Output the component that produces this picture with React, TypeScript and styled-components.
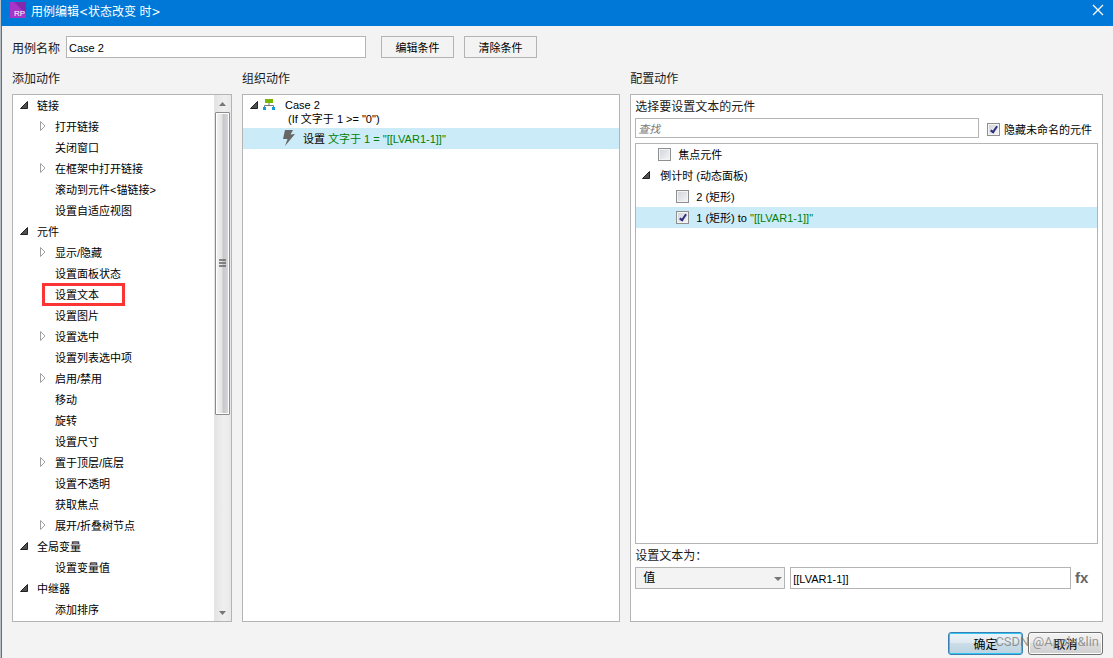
import React from 'react';
import styled, { createGlobalStyle, css } from 'styled-components';

const sans = `"Liberation Sans", "Noto Sans CJK SC", sans-serif`;
const border = '#b4b4b4';
const green = '#008000';

const GlobalStyle = createGlobalStyle`
  *, *::before, *::after { box-sizing: border-box; }
  body { margin: 0; background: #f3f3f3; font-family: ${sans}; font-size: 11px; color: #000; }
  button, input, select { font: inherit; color: inherit; margin: 0; }
  ul { list-style: none; margin: 0; padding: 0; }
`;

const Dialog = styled.main`
  display: flex;
  flex-direction: column;
  min-width: 900px;
  min-height: 100vh;
  padding-left: 1px;
  background: #f3f3f3;
  border-left: 1px solid #b9bec4;
  box-shadow: inset 1px 0 #1f83d0;
`;

const TitleBar = styled.header`
  display: flex;
  align-items: center;
  height: 26px;
  padding: 0 9px;
  margin-left: -1px;
  background: #0078d7;
  color: #fff;
`;

const Title = styled.h1`
  flex: 1;
  margin: 0 0 3px 5px;
  font: 400 12px/18px "DejaVu Sans Condensed", "Noto Sans CJK SC", sans-serif;
`;

const AppIcon = styled.svg`
  width: 16px;
  height: 16px;
  margin-bottom: 6px;
`;

const CloseButton = styled.button`
  display: flex;
  padding: 0;
  margin-bottom: 6px;
  border: 0;
  background: none;
`;

const Body = styled.div`
  flex: 1;
  display: flex;
  flex-direction: column;
  padding: 10px 10px 3px;
`;

const NameRow = styled.form`
  display: flex;
  align-items: center;
  gap: 10px;
`;

const NameLabel = styled.label`
  margin-right: -4px;
  font-size: 12px;
  color: #1a1a1a;
`;

const TextInput = styled.input<{ $height?: number }>`
  height: ${(p) => p.$height ?? 22}px;
  min-width: 0;
  padding: 2px 2px 0;
  border: 1px solid ${border};
  border-radius: 0;
  background: #fff;
  outline: 0;
  &::placeholder { color: #777; font-style: italic; opacity: 1; }
`;

const NameInput = styled(TextInput)`
  width: 300px;
  margin-right: 5px;
`;

const FlatButton = styled.button`
  width: 73px;
  height: 22px;
  padding: 0 0 1px;
  border: 1px solid ${border};
  background: #f3f3f3;
`;

const Columns = styled.div`
  flex: 1;
  display: grid;
  grid-template-columns: 220px 4fr 5fr;
  gap: 10px;
  padding: 10px 0;
`;

const Column = styled.section`
  display: flex;
  flex-direction: column;
  min-width: 0;
`;

const ColumnTitle = styled.h2`
  margin: 0 0 3px;
  font: 400 12px/23px ${sans};
  color: #1a1a1a;
`;

const Panel = styled.div`
  flex: 1;
  display: flex;
  border: 1px solid ${border};
  background: #fff;
`;

const Tree = styled.ul`
  flex: 1;
  min-width: 0;
`;

const TreeRow = styled.li<{ $indent: number; $selected?: boolean }>`
  position: relative;
  display: flex;
  align-items: center;
  height: 21px;
  padding: 0 0 2px ${(p) => p.$indent}px;
  white-space: pre;
  background: ${(p) => (p.$selected ? '#cbebf8' : 'transparent')};
`;

const Toggle = styled.button`
  flex: none;
  display: flex;
  align-items: center;
  width: 18px;
  height: 14px;
  padding: 0;
  border: 0;
  background: none;
`;

const ArrowSlot = styled.span`
  display: flex;
  justify-content: center;
  width: 10px;
`;

const Marker = styled.span`
  position: absolute;
  left: 29px;
  top: -1px;
  width: 83px;
  height: 23px;
  border: 3px solid #fb3434;
`;

const Scrollbar = styled.div`
  display: flex;
  flex-direction: column;
  align-items: center;
  width: 17px;
  background: linear-gradient(90deg, #e3e3e3, #efefef 60%, #e8e8e8);
`;

const ScrollArrow = styled.button`
  display: flex;
  justify-content: center;
  align-items: center;
  width: 17px;
  height: 17px;
  padding: 0;
  border: 0;
  background: none;
`;

const ScrollTrack = styled.div`
  flex: 1;
  align-self: stretch;
  padding: 0 1px;
`;

const ScrollThumb = styled.div`
  display: flex;
  align-items: center;
  justify-content: center;
  height: 61.5%;
  border: 1px solid #8b8b8b;
  border-radius: 1px;
  box-shadow: inset 0 0 0 1px #fff;
  background: linear-gradient(90deg, #f4f4f4, #e4e4e6 45%, #c6c7ca 55%, #d9d9dc);
`;

const CaseRow = styled.li`
  display: flex;
  align-items: flex-start;
  padding: 3px 0 2px 6px;
  line-height: 14px;
`;

const CaseIcon = styled.svg`
  flex: none;
  width: 12px;
  height: 14px;
  margin: 0 10px 0 -4px;
`;

const CaseText = styled.div`
  white-space: pre;
`;

const Condition = styled.div`
  padding-left: 3px;
`;

const Green = styled.span`
  color: ${green};
`;

const ActionIcon = styled.svg`
  width: 14px;
  height: 16px;
  margin-right: 7px;
`;

const ConfigPanel = styled(Panel)`
  flex-direction: column;
  padding: 0 4px 32px;
`;

const FieldTitle = styled.label`
  padding-top: 2px;
  font-size: 12px;
  line-height: 21px;
  color: #1a1a1a;
`;

const SearchRow = styled.div`
  display: flex;
  align-items: center;
  gap: 8px;
  padding-right: 6px;
`;

const SearchInput = styled(TextInput)`
  flex: 1;
`;

const CheckLabel = styled.label`
  display: flex;
  align-items: center;
  gap: 4px;
`;

const HideLabel = styled(CheckLabel)`
  padding-top: 2px;
`;

const WidgetLabel = styled(CheckLabel)`
  gap: 7px;
`;

const tick = css`
  &:checked::after {
    content: '';
    position: absolute;
    left: 4px;
    top: 1px;
    width: 4px;
    height: 8px;
    border: solid #2c2f80;
    border-width: 0 2px 2px 0;
    transform: rotate(35deg);
  }
`;

const Checkbox = styled.input`
  position: relative;
  flex: none;
  appearance: none;
  width: 13px;
  height: 13px;
  && { margin-top: 1px; }
  border: 1px solid #8e8f8f;
  background: linear-gradient(135deg, #cfd3d9, #f6f6f6);
  box-shadow: inset 0 0 0 1px #f4f4f4;
  ${tick}
`;

const WidgetList = styled.ul`
  flex: 1;
  margin-top: 5px;
  border: 1px solid ${border};
`;

const ValueRow = styled.div`
  display: flex;
  align-items: center;
`;

const SelectBox = styled.div`
  position: relative;
  width: 150px;
  margin-right: 5px;
`;

const Select = styled.select`
  display: block;
  width: 100%;
  height: 22px;
  padding: 0 7px;
  border: 1px solid ${border};
  border-radius: 0;
  appearance: none;
  background: #f3f3f3;
  font-size: 12px;
`;

const SelectArrow = styled.svg`
  position: absolute;
  right: 3px;
  top: 10px;
  pointer-events: none;
`;

const ValueInput = styled(TextInput)`
  flex: 1;
`;

const FxButton = styled.button`
  width: 27px;
  padding: 0 0 0 4px;
  border: 0;
  background: none;
  text-align: left;
  font-size: 15px;
  font-weight: 700;
  line-height: 20px;
  color: #666;
`;

const Footer = styled.footer`
  position: relative;
  display: flex;
  justify-content: flex-end;
  gap: 5px;
`;

const PushButton = styled.button<{ $primary?: boolean }>`
  width: 75px;
  height: 23px;
  padding: 0;
  border: 1px solid ${(p) => (p.$primary ? '#3c7fb1' : '#707070')};
  border-radius: 3px;
  font-size: 12px;
  box-shadow: inset 0 0 0 1px ${(p) => (p.$primary ? '#2fc6f5' : '#fbfbfb')};
  background: ${(p) =>
    p.$primary
      ? 'linear-gradient(#eef4f8, #dde9f0 49%, #cbdde8 50%, #bcd3e0)'
      : 'linear-gradient(#f2f2f2, #ebebeb 49%, #dddddd 50%, #cfcfcf)'};
`;

const Watermark = styled.span`
  position: absolute;
  right: 4px;
  top: 0;
  font-family: Roboto, sans-serif;
  font-size: 13px;
  line-height: 19px;
  color: rgba(120, 120, 120, 0.75);
  pointer-events: none;
`;

const OpenArrow = () => (
  <svg width="8" height="8" viewBox="0 0 8 8" aria-hidden="true">
    <path d="M7.5 0.5V7.5H0.5Z" fill="#505050" stroke="#222" />
  </svg>
);

const ClosedArrow = () => (
  <svg width="7" height="10" viewBox="0 0 7 10" aria-hidden="true">
    <path d="M1.5 0.5V9.5L6 5Z" fill="#fff" stroke="#a0a0a0" />
  </svg>
);

type Node = { text: string; level: 0 | 1; arrow?: boolean; marked?: boolean };

const group = (text: string): Node => ({ text, level: 0, arrow: true });
const branch = (text: string): Node => ({ text, level: 1, arrow: true });
const leaf = (text: string, marked = false): Node => ({ text, level: 1, marked });

const actions: Node[] = [
  group('链接'),
  branch('打开链接'),
  leaf('关闭窗口'),
  branch('在框架中打开链接'),
  leaf('滚动到元件<锚链接>'),
  leaf('设置自适应视图'),
  group('元件'),
  branch('显示/隐藏'),
  leaf('设置面板状态'),
  leaf('设置文本', true),
  leaf('设置图片'),
  branch('设置选中'),
  leaf('设置列表选中项'),
  branch('启用/禁用'),
  leaf('移动'),
  leaf('旋转'),
  leaf('设置尺寸'),
  branch('置于顶层/底层'),
  leaf('设置不透明'),
  leaf('获取焦点'),
  branch('展开/折叠树节点'),
  group('全局变量'),
  leaf('设置变量值'),
  group('中继器'),
  leaf('添加排序'),
];

const ActionRow = ({ node }: { node: Node }) => {
  const base = node.level === 0 ? 6 : 24;
  return (
    <TreeRow $indent={node.arrow ? base : base + 18}>
      {node.arrow && (
        <Toggle type="button" aria-label={node.text}>
          <ArrowSlot>{node.level === 0 ? <OpenArrow /> : <ClosedArrow />}</ArrowSlot>
        </Toggle>
      )}
      {node.text}
      {node.marked && <Marker />}
    </TreeRow>
  );
};

export default function App() {
  return (
    <>
      <GlobalStyle />
      <Dialog>
        <TitleBar>
          <AppIcon viewBox="0 0 16 16" aria-hidden="true">
            <rect width="16" height="16" fill="#a835c8" />
            <path d="M4 0H16V12Z" fill="#8428ac" />
            <text x="4" y="14" fontSize="8" fontFamily="Liberation Sans, sans-serif" fill="#fff">RP</text>
          </AppIcon>
          <Title>用例编辑&lt;状态改变 时&gt;</Title>
          <CloseButton type="button" aria-label="关闭">
            <svg width="12" height="12" viewBox="0 0 12 12">
              <path d="M1 1L11 11M11 1L1 11" stroke="#fff" strokeWidth="1.3" fill="none" />
            </svg>
          </CloseButton>
        </TitleBar>

        <Body>
          <NameRow>
            <NameLabel htmlFor="case-name">用例名称</NameLabel>
            <NameInput id="case-name" defaultValue="Case 2" />
            <FlatButton type="button">编辑条件</FlatButton>
            <FlatButton type="button">清除条件</FlatButton>
          </NameRow>

          <Columns>
            <Column>
              <ColumnTitle>添加动作</ColumnTitle>
              <Panel>
                <Tree>
                  {actions.map((node) => (
                    <ActionRow key={node.text} node={node} />
                  ))}
                </Tree>
                <Scrollbar>
                  <ScrollArrow type="button" aria-label="向上滚动">
                    <svg width="7" height="4"><path d="M0 4L3.5 0L7 4Z" fill="#777" /></svg>
                  </ScrollArrow>
                  <ScrollTrack>
                    <ScrollThumb>
                      <svg width="7" height="8">
                        <path d="M0 1H7M0 4H7M0 7H7" stroke="#666" strokeWidth="1.5" />
                      </svg>
                    </ScrollThumb>
                  </ScrollTrack>
                  <ScrollArrow type="button" aria-label="向下滚动">
                    <svg width="7" height="4"><path d="M0 0H7L3.5 4Z" fill="#777" /></svg>
                  </ScrollArrow>
                </Scrollbar>
              </Panel>
            </Column>

            <Column>
              <ColumnTitle>组织动作</ColumnTitle>
              <Panel>
                <Tree>
                  <CaseRow>
                    <Toggle type="button" aria-label="Case 2">
                      <ArrowSlot><OpenArrow /></ArrowSlot>
                    </Toggle>
                    <CaseIcon viewBox="0 0 12 14" aria-hidden="true">
                      <path d="M6 5V8M1.5 10V7.5H10.5V10" fill="none" stroke="#777" />
                      <rect x="2" y="1" width="8" height="4" fill="#76b900" />
                      <rect x="0" y="9" width="3" height="3" fill="#0d9ddb" />
                      <rect x="9" y="9" width="3" height="3" fill="#0d9ddb" />
                    </CaseIcon>
                    <CaseText>
                      Case 2
                      <Condition>(If 文字于 1 &gt;= "0")</Condition>
                    </CaseText>
                  </CaseRow>
                  <TreeRow $indent={39} $selected>
                    <ActionIcon viewBox="0 0 14 16" aria-hidden="true">
                      <path d="M3 0H11L8.5 4.5L13 4L3 16L5.5 9H1Z" fill="#666" />
                    </ActionIcon>
                    设置 <Green>文字于 1 = "[[LVAR1-1]]"</Green>
                  </TreeRow>
                </Tree>
              </Panel>
            </Column>

            <Column>
              <ColumnTitle>配置动作</ColumnTitle>
              <ConfigPanel>
                <FieldTitle htmlFor="widget-search">选择要设置文本的元件</FieldTitle>
                <SearchRow>
                  <SearchInput id="widget-search" $height={20} placeholder="查找" />
                  <HideLabel>
                    <Checkbox type="checkbox" defaultChecked />
                    隐藏未命名的元件
                  </HideLabel>
                </SearchRow>
                <WidgetList>
                  <TreeRow $indent={22}>
                    <WidgetLabel><Checkbox type="checkbox" />焦点元件</WidgetLabel>
                  </TreeRow>
                  <TreeRow $indent={6}>
                    <Toggle type="button" aria-label="倒计时"><OpenArrow /></Toggle>
                    倒计时 (动态面板)
                  </TreeRow>
                  <TreeRow $indent={40}>
                    <WidgetLabel><Checkbox type="checkbox" />2 (矩形)</WidgetLabel>
                  </TreeRow>
                  <TreeRow $indent={40} $selected>
                    <WidgetLabel>
                      <Checkbox type="checkbox" defaultChecked />
                      <span>1 (矩形) to <Green>"[[LVAR1-1]]"</Green></span>
                    </WidgetLabel>
                  </TreeRow>
                </WidgetList>
                <FieldTitle htmlFor="value-type">设置文本为：</FieldTitle>
                <ValueRow>
                  <SelectBox>
                    <Select id="value-type" defaultValue="值">
                      <option>值</option>
                    </Select>
                    <SelectArrow width="8" height="4" aria-hidden="true">
                      <path d="M0 0H8L4 4Z" fill="#777" />
                    </SelectArrow>
                  </SelectBox>
                  <ValueInput aria-label="值" defaultValue="[[LVAR1-1]]" />
                  <FxButton type="button">fx</FxButton>
                </ValueRow>
              </ConfigPanel>
            </Column>
          </Columns>

          <Footer>
            <PushButton type="button" $primary>确定</PushButton>
            <PushButton type="button">取消</PushButton>
            <Watermark>CSDN @Apple&amp;lin</Watermark>
          </Footer>
        </Body>
      </Dialog>
    </>
  );
}
